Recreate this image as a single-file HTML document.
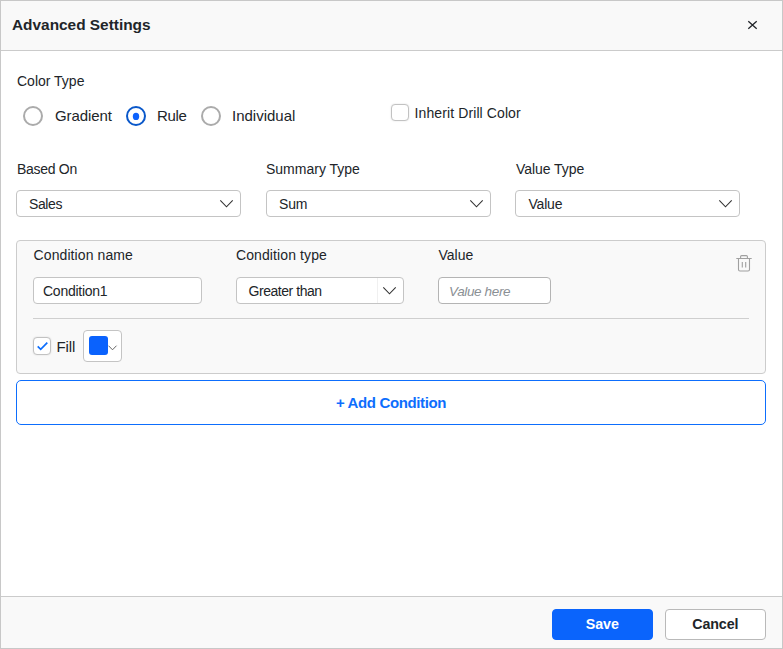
<!DOCTYPE html>
<html lang="en">
<head>
<meta charset="utf-8">
<title>Advanced Settings</title>
<style>
*{box-sizing:border-box;margin:0;padding:0}
html,body{width:783px;height:649px;overflow:hidden;background:#fff}
body{font-family:"Liberation Sans",sans-serif;color:#212529;font-size:14px;position:relative}
.dlg{position:absolute;left:0;top:0;width:783px;height:649px;border:1px solid #c8c8c8;background:#fff}
.hdr{position:absolute;left:1px;top:1px;width:781px;height:49px;background:#f9f9f9}
.hdrline{position:absolute;left:1px;top:50px;width:781px;height:1px;background:#cbcbcb}
.title{position:absolute;left:12px;top:15px;font-size:15.4px;font-weight:bold;line-height:20px;color:#212529;white-space:nowrap}
.close{position:absolute;left:742px;top:15px;width:20px;height:20px}
.abs{position:absolute;white-space:nowrap;line-height:20px}
.lbl{font-size:14px;color:#212529}
.rlbl{font-size:15px;color:#212529}
.radio{position:absolute;width:20px;height:20px;border-radius:50%;border:2px solid #ababab;background:#fff}
.radio.on{border:2px solid #0a58ca}
.chk{position:absolute;width:18px;height:18px;border:1px solid #c2c2c2;border-radius:4px;background:#fff;box-shadow:0 0 2px rgba(0,0,0,.12)}
.dd{position:absolute;height:27px;border:1px solid #c4c4c4;border-radius:4px;background:#fff}
.dd span{position:absolute;left:13px;top:3px;line-height:20px;font-size:14px;color:#212529;white-space:nowrap}
.dd svg{position:absolute;right:-1px;top:0}
.cond{position:absolute;left:16px;top:240px;width:750px;height:134px;border:1px solid #cccccc;border-radius:4px;background:#f9f9f9}
.inp{position:absolute;height:27px;border:1px solid #c4c4c4;border-radius:4px;background:#fff}
.inp span{position:absolute;left:9px;top:3px;line-height:20px;font-size:14px;color:#212529;white-space:nowrap}
.inp span.ph{color:#8a8f94;font-style:italic}
.hr{position:absolute;left:33px;top:318px;width:716px;height:1px;background:#cfcfcf}
.addc{position:absolute;left:16px;top:380px;width:750px;height:45px;border:1px solid #0d6efd;border-radius:5px;background:#fff;text-align:center;line-height:43px;font-size:15px;font-weight:bold;color:#0d6efd;letter-spacing:-0.37px}
.ftr{position:absolute;left:1px;top:597px;width:781px;height:51px;background:#f9f9f9}
.ftrline{position:absolute;left:1px;top:596px;width:781px;height:1px;background:#cbcbcb}
.btn{position:absolute;top:609px;width:101px;height:31px;border-radius:4px;text-align:center;line-height:27px;font-size:15px;font-weight:bold}
.btn span{display:inline-block;transform:scaleX(0.95);letter-spacing:-0.1px}
.save{left:552px;background:#0a64fc;color:#fff;border:1px solid #0a64fc}
.cancel{left:665px;background:#fff;color:#212529;border:1px solid #b9b9b9}
</style>
</head>
<body>
<div class="dlg"></div>
<div class="hdr"></div><div class="hdrline"></div>
<div class="title">Advanced Settings</div>
<svg class="close" viewBox="0 0 20 20"><path d="M6.300 6.300 L14.700 13.700 M14.700 6.300 L6.300 13.700" stroke="#212529" stroke-width="1.300" fill="none"/></svg>

<div class="abs lbl" style="left:17px;top:71px">Color Type</div>

<div class="radio" style="left:23px;top:106px"></div>
<div class="abs rlbl" style="left:55px;top:106px;letter-spacing:-0.07px">Gradient</div>
<div class="radio on" style="left:126px;top:106px"></div>
<svg class="abs" style="left:126px;top:106px" width="20" height="20" viewBox="0 0 20 20"><ellipse cx="10" cy="10.400" rx="3.200" ry="3.700" fill="#0d62fd"/></svg>
<div class="abs rlbl" style="left:157px;top:106px;letter-spacing:-0.35px">Rule</div>
<div class="radio" style="left:201px;top:106px"></div>
<div class="abs rlbl" style="left:232px;top:106px">Individual</div>

<div class="chk" style="left:391px;top:104px;height:17px"></div>
<div class="abs lbl" style="left:414.600px;top:103px;letter-spacing:0.1px">Inherit Drill Color</div>

<div class="abs lbl" style="left:17px;top:159px;letter-spacing:-0.3px">Based On</div>
<div class="abs lbl" style="left:266px;top:159px">Summary Type</div>
<div class="abs lbl" style="left:516px;top:159px;letter-spacing:-0.05px">Value Type</div>

<div class="dd" style="left:16px;top:190px;width:225px"><span style="left:12px;letter-spacing:-0.4px">Sales</span><svg width="30" height="27" viewBox="0 0 30 27"><path d="M9.300 9.300 L15.500 15.800 L21.700 9.300" stroke="#333" stroke-width="1.100" fill="none"/></svg></div>
<div class="dd" style="left:266px;top:190px;width:225px"><span style="left:12px;letter-spacing:-0.2px">Sum</span><svg width="30" height="27" viewBox="0 0 30 27"><path d="M9.300 9.300 L15.500 15.800 L21.700 9.300" stroke="#333" stroke-width="1.100" fill="none"/></svg></div>
<div class="dd" style="left:515px;top:190px;width:225px"><span style="left:12.500px;letter-spacing:-0.2px">Value</span><svg width="30" height="27" viewBox="0 0 30 27"><path d="M9.300 9.300 L15.500 15.800 L21.700 9.300" stroke="#333" stroke-width="1.100" fill="none"/></svg></div>

<div class="cond"></div>
<div class="abs lbl" style="left:33.600px;top:245px;letter-spacing:0.09px">Condition name</div>
<div class="abs lbl" style="left:236px;top:245px;letter-spacing:0.1px">Condition type</div>
<div class="abs lbl" style="left:438.500px;top:245px">Value</div>

<div class="inp" style="left:33px;top:277px;width:169px"><span style="letter-spacing:-0.26px">Condition1</span></div>
<div class="dd" style="left:236px;top:277px;width:168px"><span style="left:11.500px;letter-spacing:-0.45px">Greater than</span><i style="position:absolute;left:140px;top:0;width:1px;height:25px;background:#f0f0f0"></i><svg width="30" height="27" viewBox="0 0 30 27"><path d="M9.300 9.300 L15.500 15.800 L21.700 9.300" stroke="#333" stroke-width="1.100" fill="none"/></svg></div>
<div class="inp" style="left:438px;top:277px;width:113px;border-color:#b4b4b4"><span class="ph" style="left:10px;top:4px;font-size:13.500px;letter-spacing:-0.36px">Value here</span></div>

<svg class="abs" style="left:730px;top:250px" width="28" height="28" viewBox="0 0 28 28"><path d="M6.300 8.500 H21.700 M10.600 8.500 V6.600 Q10.600 5.600 11.600 5.600 H16.400 Q17.400 5.600 17.400 6.600 V8.500 M8.500 8.500 V19.500 Q8.500 21 10 21 H18 Q19.500 21 19.500 19.500 V8.500 M12.300 12 V17.500 M15.700 12 V17.500" stroke="#a0a0a0" stroke-width="1.100" fill="none"/></svg>

<div class="hr"></div>

<div class="chk" style="left:33px;top:337px"><svg width="16" height="16" viewBox="0 0 16 16" style="position:absolute;left:0;top:0"><path d="M3.700 8.400 L6.700 11.300 L13.300 4.600" stroke="#0d6efd" stroke-width="1.700" fill="none"/></svg></div>
<div class="abs lbl" style="left:56.500px;top:337px;font-size:15px;letter-spacing:-0.15px">Fill</div>
<div class="inp" style="left:83px;top:330px;width:39px;height:32px"></div>
<div style="position:absolute;left:89px;top:336px;width:19px;height:19px;background:#0a62fd;border-radius:3px"></div>
<svg class="abs" style="left:106px;top:342px" width="14" height="12" viewBox="0 0 14 12"><path d="M2.500 3.700 L6.500 7.800 L10.500 3.700" stroke="#666" stroke-width="1" fill="none"/></svg>

<div class="addc">+ Add Condition</div>

<div class="ftrline"></div><div class="ftr"></div>
<div class="btn save"><span>Save</span></div>
<div class="btn cancel"><span>Cancel</span></div>
</body>
</html>
